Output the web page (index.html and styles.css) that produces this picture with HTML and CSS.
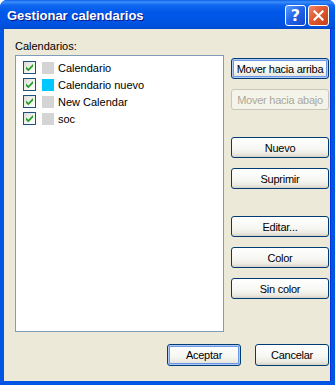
FILE: index.html
```html
<!DOCTYPE html>
<html lang="es">
<head>
    <meta charset="UTF-8">
    <title>Gestionar calendarios</title>
    <link rel="stylesheet" href="styles.css">
</head>
<body>
    <div class="window">
        <div class="titlebar">
            <span class="title">Gestionar calendarios</span>
            <div class="caption-btn help">?</div>
            <div class="caption-btn close">
                <svg width="11" height="11" viewBox="0 0 11 11">
                    <path d="M1.5 1.5 L9.5 9.5 M9.5 1.5 L1.5 9.5" stroke="#fff" stroke-width="2.2" stroke-linecap="square"/>
                </svg>
            </div>
        </div>

        <div class="content">
            <div class="label">Calendarios:</div>

            <div class="main">
                <div class="list">
                    <div class="item">
                        <span class="check"><svg width="11" height="11" viewBox="0 0 11 11"><path d="M2 4.5 L4.3 6.8 L9 2.1 L9 4.6 L4.3 9.3 L2 7 Z" fill="#21a121"/></svg></span>
                        <span class="swatch"></span>
                        <span>Calendario</span>
                    </div>
                    <div class="item">
                        <span class="check"><svg width="11" height="11" viewBox="0 0 11 11"><path d="M2 4.5 L4.3 6.8 L9 2.1 L9 4.6 L4.3 9.3 L2 7 Z" fill="#21a121"/></svg></span>
                        <span class="swatch cyan"></span>
                        <span>Calendario nuevo</span>
                    </div>
                    <div class="item">
                        <span class="check"><svg width="11" height="11" viewBox="0 0 11 11"><path d="M2 4.5 L4.3 6.8 L9 2.1 L9 4.6 L4.3 9.3 L2 7 Z" fill="#21a121"/></svg></span>
                        <span class="swatch"></span>
                        <span>New Calendar</span>
                    </div>
                    <div class="item">
                        <span class="check"><svg width="11" height="11" viewBox="0 0 11 11"><path d="M2 4.5 L4.3 6.8 L9 2.1 L9 4.6 L4.3 9.3 L2 7 Z" fill="#21a121"/></svg></span>
                        <span class="swatch"></span>
                        <span>soc</span>
                    </div>
                </div>

                <div class="side">
                    <button class="btn focused">Mover hacia arriba</button>
                    <button class="btn" disabled>Mover hacia abajo</button>
                    <button class="btn group">Nuevo</button>
                    <button class="btn">Suprimir</button>
                    <button class="btn group">Editar...</button>
                    <button class="btn">Color</button>
                    <button class="btn">Sin color</button>
                </div>
            </div>

            <div class="footer">
                <button class="btn wide focused">Aceptar</button>
                <button class="btn wide">Cancelar</button>
            </div>
        </div>
    </div>
</body>
</html>
```

FILE: styles.css
```css
body {
    margin: 0;
    padding: 0;
    font-family: "Liberation Sans", Arial, sans-serif;
    font-size: 11px;
    background-color: #fff;
}

.window {
    width: 335px;
    height: 385px;
    display: flex;
    flex-direction: column;
    background-color: #0055e5;
    border-radius: 7px 7px 0 0;
    overflow: hidden;
}

.titlebar {
    height: 29px;
    flex: none;
    display: flex;
    align-items: center;
    padding: 1px 6px 0 7px;
    box-sizing: border-box;
    background: linear-gradient(#0a5fe8 0, #3d8ef9 2px, #1068f0 5px, #0058ea 12px, #0054e3 22px, #0050da 27px, #0046c8 29px);
}

.title {
    flex: 1;
    color: #fff;
    font-weight: bold;
    font-size: 13px;
    text-shadow: 1px 1px #0a1883;
}

.caption-btn {
    width: 19px;
    height: 19px;
    border: 1px solid #fff;
    border-radius: 3px;
    display: flex;
    align-items: center;
    justify-content: center;
    color: #fff;
}

.help {
    margin-right: 2px;
    background: linear-gradient(135deg, #5b9bfb 0%, #1f62e8 50%, #1447c9 100%);
    font-family: "DejaVu Sans", sans-serif;
    font-weight: bold;
    font-size: 16px;
}

.close {
    background: linear-gradient(135deg, #f0876a 0%, #e0582f 45%, #c2401a 100%);
}

.content {
    flex: 1;
    margin: 0 4px 4px 4px;
    padding: 11px 2px 0 11px;
    background-color: #ece9d8;
    box-shadow: -1px 0 0 #0831d9 inset;
    display: flex;
    flex-direction: column;
}

.label {
    height: 13px;
    line-height: 13px;
    margin-bottom: 2px;
}

.main {
    display: flex;
}

.list {
    width: 210px;
    height: 277px;
    box-sizing: border-box;
    border: 1px solid #7f9db9;
    background-color: #fff;
    padding: 3px 0 0 7px;
}

.item {
    height: 17px;
    display: flex;
    align-items: center;
}

.check {
    width: 11px;
    height: 11px;
    border: 1px solid #1c5180;
    background: linear-gradient(135deg, #dcdcd7 0%, #f4f4f1 60%, #fff 100%);
    margin-right: 6px;
    display: flex;
}

.swatch {
    width: 12px;
    height: 12px;
    background-color: #d4d4d4;
    margin-right: 4px;
}

.swatch.cyan {
    background-color: #00c8ff;
}

.side {
    display: flex;
    flex-direction: column;
    margin-left: 7px;
    padding-top: 3px;
}

.btn {
    width: 98px;
    height: 21px;
    margin-bottom: 10px;
    padding: 0;
    font-family: "Liberation Sans", Arial, sans-serif;
    font-size: 11px;
    font-weight: normal;
    letter-spacing: -0.25px;
    white-space: nowrap;
    color: #000;
    border: 1px solid #003c74;
    border-radius: 3px;
    background: linear-gradient(#ffffff 0%, #f6f6f2 60%, #ebe9e0 85%, #d6d0c5 100%);
}

.btn.group {
    margin-top: 17px;
}

.btn.focused {
    box-shadow: inset 0 0 0 1px #aecbf7, inset 0 0 0 2px #6d98e8;
}

.btn:disabled {
    color: #aca899;
    border-color: #c9c7ba;
    background: #f5f4ea;
}

.footer {
    display: flex;
    justify-content: flex-end;
    gap: 14px;
    margin-top: 12px;
}

.btn.wide {
    width: 74px;
    height: 22px;
    margin-bottom: 0;
}
```
